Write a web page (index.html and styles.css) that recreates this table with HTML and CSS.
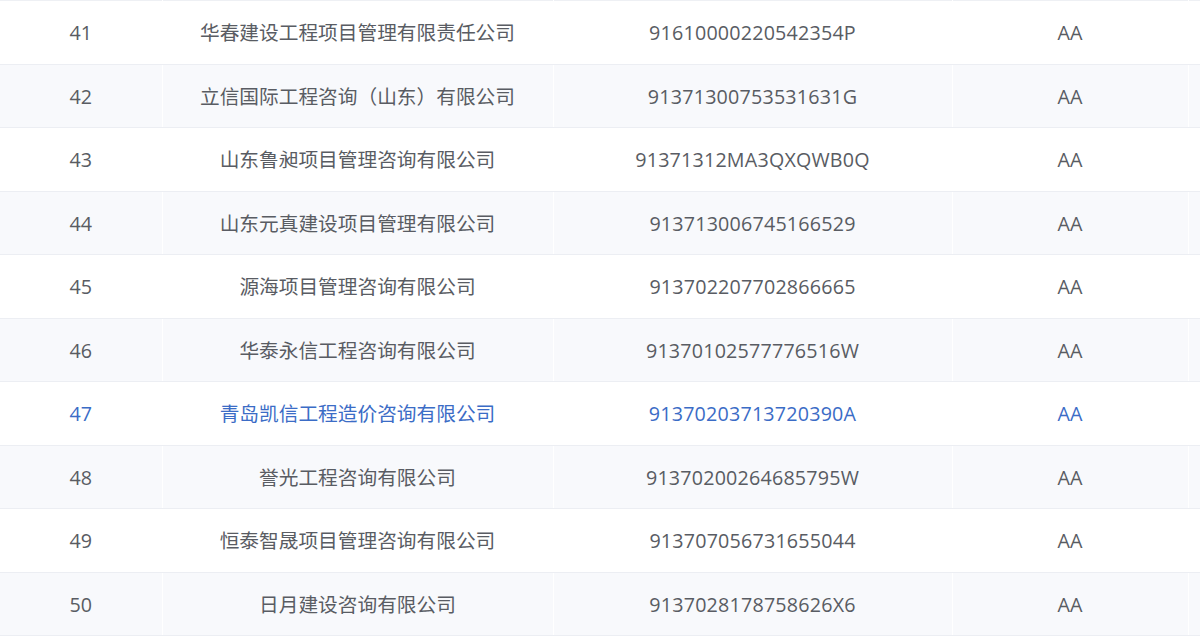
FILE: index.html
```html
<!DOCTYPE html>
<html lang="zh-CN">
<head>
<meta charset="utf-8">
<title>信用评价名单</title>
<link rel="stylesheet" href="styles.css">
</head>
<body>
<table class="grid">
  <colgroup>
    <col class="c-no"><col class="c-name"><col class="c-code"><col class="c-level"><col class="c-gutter">
  </colgroup>
  <tbody>
    <tr><td>41</td><td>华春建设工程项目管理有限责任公司</td><td class="code">91610000220542354P</td><td>AA</td><td></td></tr>
    <tr class="stripe"><td>42</td><td>立信国际工程咨询（山东）有限公司</td><td class="code">91371300753531631G</td><td>AA</td><td></td></tr>
    <tr><td>43</td><td>山东鲁昶项目管理咨询有限公司</td><td class="code">91371312MA3QXQWB0Q</td><td>AA</td><td></td></tr>
    <tr class="stripe"><td>44</td><td>山东元真建设项目管理有限公司</td><td class="code">913713006745166529</td><td>AA</td><td></td></tr>
    <tr><td>45</td><td>源海项目管理咨询有限公司</td><td class="code">913702207702866665</td><td>AA</td><td></td></tr>
    <tr class="stripe"><td>46</td><td>华泰永信工程咨询有限公司</td><td class="code">91370102577776516W</td><td>AA</td><td></td></tr>
    <tr class="active"><td>47</td><td>青岛凯信工程造价咨询有限公司</td><td class="code">91370203713720390A</td><td>AA</td><td></td></tr>
    <tr class="stripe"><td>48</td><td>誉光工程咨询有限公司</td><td class="code">91370200264685795W</td><td>AA</td><td></td></tr>
    <tr><td>49</td><td>恒泰智晟项目管理咨询有限公司</td><td class="code">913707056731655044</td><td>AA</td><td></td></tr>
    <tr class="stripe"><td>50</td><td>日月建设咨询有限公司</td><td class="code">9137028178758626X6</td><td>AA</td><td></td></tr>
  </tbody>
</table>
</body>
</html>
```

FILE: styles.css
```css
html, body {
  margin: 0;
  padding: 0;
  background: #ffffff;
}

body {
  font-family: "Open Sans", "Noto Sans CJK SC", sans-serif;
  color: #595c63;
}

.grid {
  width: 1200px;
  border-collapse: collapse;
  table-layout: fixed;
  border-top: 1px solid #eef0f4;
}

.c-no { width: 162px; }
.c-name { width: 391px; }
.c-code { width: 399px; }
.c-level { width: 236px; }
.c-gutter { width: 12px; }

.grid td {
  height: 60.5px;
  padding: 2px 0 0 0;
  text-align: center;
  vertical-align: middle;
  font-size: 19.7px;
  line-height: 26px;
  border-bottom: 1px solid #eceef3;
  border-right: 1px solid #ffffff;
  white-space: nowrap;
}

.grid td.code {
  letter-spacing: 0.2px;
}

.grid td:last-child {
  border-right: none;
}

.grid tr.stripe td {
  background: #f8f9fc;
}

.grid tr.active td {
  color: #3b6cc6;
}
```
